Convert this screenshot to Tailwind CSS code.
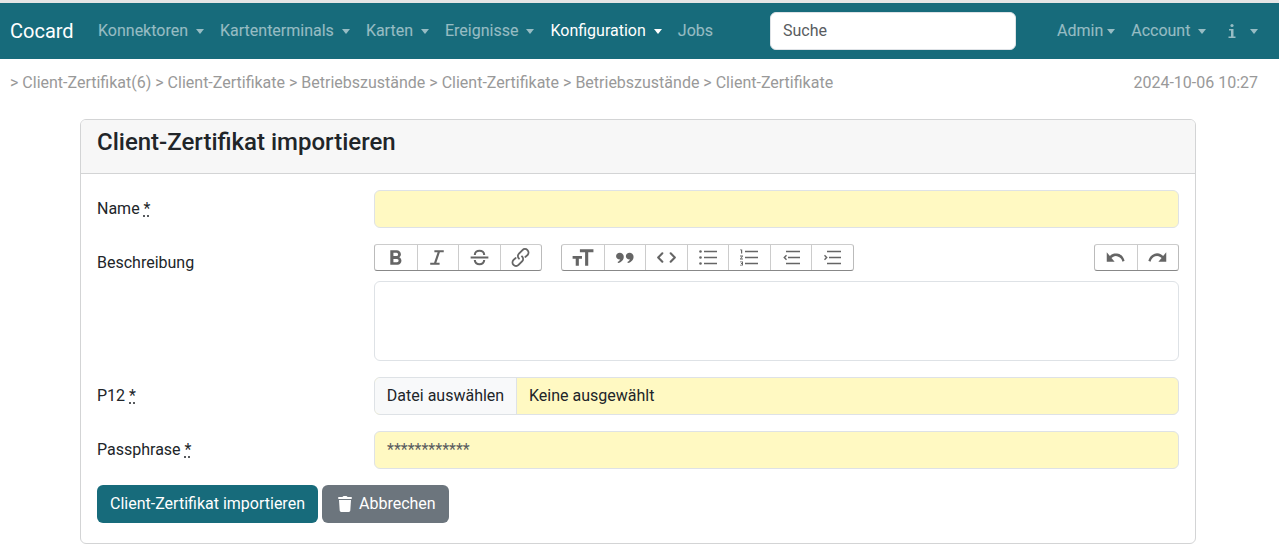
<!DOCTYPE html>
<html lang="de">
<head>
  <meta charset="UTF-8">
  <title>Client-Zertifikat importieren</title>
  <script src="https://cdn.jsdelivr.net/npm/@tailwindcss/browser@4"></script>
</head>
<body class="bg-white text-[16px] leading-6 text-[#212529] font-['Roboto',sans-serif] overflow-hidden h-[558px]">

  <div class="h-[3px] bg-[#e5e5e5]"></div>

  <!-- Navigation -->
  <nav class="h-[56px] bg-[#176b7b] flex items-center pl-[10px] text-white/55">
    <a class="text-[20px] text-white w-[80px]">Cocard</a>
    <a class="flex items-center px-2">Konnektoren<span class="ml-2 border-x-[4px] border-t-[5px] border-x-transparent border-t-white/55"></span></a>
    <a class="flex items-center px-2">Kartenterminals<span class="ml-2 border-x-[4px] border-t-[5px] border-x-transparent border-t-white/55"></span></a>
    <a class="flex items-center px-2">Karten<span class="ml-2 border-x-[4px] border-t-[5px] border-x-transparent border-t-white/55"></span></a>
    <a class="flex items-center px-2">Ereignisse<span class="ml-2 border-x-[4px] border-t-[5px] border-x-transparent border-t-white/55"></span></a>
    <a class="flex items-center px-2 text-white">Konfiguration<span class="ml-2 border-x-[4px] border-t-[5px] border-x-transparent border-t-white"></span></a>
    <a class="px-2">Jobs</a>
    <div class="w-[246px] h-[38px] ml-[49px] mr-[33px] bg-white border border-[#dee2e6] rounded-md px-3 flex items-center text-[#595c5f]">Suche</div>
    <a class="flex items-center px-2">Admin<span class="ml-1 border-x-[4px] border-t-[5px] border-x-transparent border-t-white/55"></span></a>
    <a class="flex items-center px-2">Account<span class="ml-2 border-x-[4px] border-t-[5px] border-x-transparent border-t-white/55"></span></a>
    <a class="flex items-center pl-[14px]">
      <svg class="w-[8px] h-[16px]" viewBox="0 0 8 16" fill="currentColor"><circle cx="4" cy="2.5" r="1.6"/><path d="M1 6h4.500v7.500H7.500V15H.5v-1.500h2.500V7.500H1z"/></svg>
      <span class="ml-[14px] border-x-[4px] border-t-[5px] border-x-transparent border-t-white/55"></span>
    </a>
  </nav>

  <!-- Breadcrumb -->
  <div class="h-[47px] flex items-center justify-between pl-[10px] pr-[21px] text-[#999999]">
    <div>&gt; Client-Zertifikat(6) &gt; Client-Zertifikate &gt; Betriebszustände &gt; Client-Zertifikate &gt; Betriebszustände &gt; Client-Zertifikate</div>
    <div>2024-10-06 10:27</div>
  </div>

  <!-- Card -->
  <div class="ml-[80px] mt-[13px] w-[1116px] h-[425px] border border-[#d3d4d5] rounded-md overflow-hidden">
    <div class="h-[54px] bg-[#f7f7f7] border-b border-[#d3d4d5] px-4 pt-2">
      <h4 class="text-[24px] leading-[29px] font-medium">Client-Zertifikat importieren</h4>
    </div>

    <div class="px-4 pt-4">
      <div class="grid grid-cols-[277px_805px] mb-4">
        <label class="pt-[7px]">Name <abbr class="underline decoration-dotted underline-offset-2">*</abbr></label>
        <div class="h-[38px] bg-[#fff9c2] border border-[#dee2e6] rounded-md"></div>
      </div>

      <div class="grid grid-cols-[277px_805px] mb-4">
        <label class="pt-[7px]">Beschreibung</label>
        <div>
          <div class="flex justify-between h-[27px] mb-[10px]">
            <div class="flex">
              <div class="flex h-[27px] border border-[#bbbbbb] border-t-[#cccccc] border-b-[#888888] rounded-[3px]">
                <div class="w-[41.5px] flex items-center justify-center">
                  <svg class="w-[25px] h-[25px] opacity-60" viewBox="0 0 24 24" fill="#000000"><path d="M15.600 11.800c1-.7 1.600-1.800 1.600-2.800a4 4 0 0 0-4-4H7v14h7c2.100 0 3.700-1.700 3.700-3.800 0-1.500-.8-2.800-2.100-3.400zM10 7.500h3a1.500 1.500 0 1 1 0 3h-3zm3.500 9H10v-3h3.500a1.500 1.500 0 1 1 0 3z"/></svg>
                </div>
                <div class="w-[41.5px] border-l border-[#cccccc] flex items-center justify-center">
                  <svg class="w-[25px] h-[25px] opacity-60" viewBox="0 0 24 24" fill="#000000"><path d="M9 5v2h3.100l-3.400 10H5v2h9v-2h-3.100l3.400-10H18V5z"/></svg>
                </div>
                <div class="w-[41.5px] border-l border-[#cccccc] flex items-center justify-center">
                  <svg class="w-[25px] h-[25px] opacity-60" viewBox="0 0 24 24" fill="none" stroke="#000000" stroke-width="2"><path d="M3.500 12h17M16.500 9.500C16.500 7 14.500 5.500 12 5.500S7.500 7 7.500 9.500M7.500 14.500c0 2.500 2 4 4.500 4s4.500-1.500 4.500-4"/></svg>
                </div>
                <div class="w-[41.5px] border-l border-[#cccccc] flex items-center justify-center">
                  <svg class="w-[25px] h-[25px] opacity-60" viewBox="0 0 24 24" fill="#000000"><path d="M9.880 13.700a4.300 4.300 0 0 1 0-6.070l3.370-3.370a4.260 4.260 0 0 1 6.070 0 4.300 4.300 0 0 1 0 6.060l-1.960 1.720a.91.91 0 1 1-1.300-1.300l1.970-1.710a2.460 2.460 0 0 0-3.480-3.480l-3.380 3.370a2.460 2.460 0 0 0 0 3.480.91.91 0 1 1-1.290 1.300zm4.240-3.400a4.300 4.300 0 0 1 0 6.060l-3.370 3.370a4.260 4.260 0 0 1-6.070 0 4.300 4.300 0 0 1 0-6.060l1.960-1.720a.91.91 0 1 1 1.300 1.300l-1.970 1.710a2.460 2.460 0 0 0 3.480 3.480l3.380-3.370a2.460 2.460 0 0 0 0-3.480.91.91 0 1 1 1.290-1.300z"/></svg>
                </div>
              </div>
              <div class="flex h-[27px] ml-[19px] border border-[#bbbbbb] border-t-[#cccccc] border-b-[#888888] rounded-[3px]">
                <div class="w-[41.5px] flex items-center justify-center">
                  <svg class="w-[25px] h-[25px] opacity-60" viewBox="0 0 24 24" fill="#000000"><path d="M9.500 4h13v3H17.500v13h-3V7h-5zM2.500 10.500h9v2.800H8.500V20h-3v-6.700h-3z"/></svg>
                </div>
                <div class="w-[41.5px] border-l border-[#cccccc] flex items-center justify-center">
                  <svg class="w-[25px] h-[25px] opacity-60" viewBox="0 0 24 24" fill="#000000"><path d="M7.500 7.500c2.300 0 3.800 1.700 3.800 3.900 0 3-2.300 5.300-5.400 6l-.6-1c1.400-.6 2.300-1.500 2.600-2.600-2.200.2-4-1.200-4-3.100 0-1.800 1.500-3.200 3.600-3.200zM16.900 7.500c2.300 0 3.800 1.700 3.800 3.900 0 3-2.300 5.300-5.400 6l-.6-1c1.400-.6 2.300-1.500 2.600-2.600-2.200.2-4-1.200-4-3.100 0-1.800 1.500-3.200 3.600-3.200z"/></svg>
                </div>
                <div class="w-[41.5px] border-l border-[#cccccc] flex items-center justify-center">
                  <svg class="w-[25px] h-[25px] opacity-60" viewBox="0 0 24 24" fill="none" stroke="#000000" stroke-width="2" stroke-linecap="round" stroke-linejoin="round"><path d="M8 8l-4 4 4 4M16 8l4 4-4 4"/></svg>
                </div>
                <div class="w-[41.5px] border-l border-[#cccccc] flex items-center justify-center">
                  <svg class="w-[20px] h-[25px] opacity-60" viewBox="0 0 20 24" fill="#000000"><circle cx="2.500" cy="6" r="1.300"/><circle cx="2.500" cy="12" r="1.300"/><circle cx="2.500" cy="18" r="1.300"/><path d="M6 5.200h13v1.600H6zM6 11.200h13v1.600H6zM6 17.200h13v1.600H6z"/></svg>
                </div>
                <div class="w-[41.5px] border-l border-[#cccccc] flex items-center justify-center">
                  <svg class="w-[20px] h-[25px] opacity-60" viewBox="0 0 20 24" fill="#000000"><path d="M6 5.200h13v1.600H6zM6 11.200h13v1.600H6zM6 17.200h13v1.600H6zM2 4h1.200v4H2zM1 4h1v.8H1zM1 10h3v.8L2.200 13H4v1H1v-.8L2.800 11H1zM1 16h3v4H1v-.8h2v-.8H2v-.8h1v-.8H1z"/></svg>
                </div>
                <div class="w-[41.5px] border-l border-[#cccccc] flex items-center justify-center">
                  <svg class="w-[20px] h-[25px] opacity-60" viewBox="0 0 20 24" fill="#000000"><path d="M5 5.200h14v1.600H5zM7 11.200h12v1.600H7zM5 17.200h14v1.600H5zM5 9.300l1 1L4.300 12 6 13.700l-1 1L2.300 12z"/></svg>
                </div>
                <div class="w-[41.5px] border-l border-[#cccccc] flex items-center justify-center">
                  <svg class="w-[20px] h-[25px] opacity-60" viewBox="0 0 20 24" fill="#000000"><path d="M5 5.200h14v1.600H5zM7 11.200h12v1.600H7zM5 17.200h14v1.600H5zM3 9.300l-1 1L3.700 12 2 13.700l1 1L5.700 12z"/></svg>
                </div>
              </div>
            </div>
            <div class="flex h-[27px] border border-[#bbbbbb] border-t-[#cccccc] border-b-[#888888] rounded-[3px]">
              <div class="w-[41.5px] flex items-center justify-center">
                <svg class="w-[21px] h-[25px] opacity-60" viewBox="0 0 24 24" preserveAspectRatio="none" fill="#000000"><path d="M12.500 8c-2.600 0-5 1-6.900 2.600L2 7v9h9l-3.600-3.600A8 8 0 0 1 20 16l2.400-.8a10.500 10.500 0 0 0-10-7.200z"/></svg>
              </div>
              <div class="w-[41.5px] border-l border-[#cccccc] flex items-center justify-center">
                <svg class="w-[21px] h-[25px] opacity-60" viewBox="0 0 24 24" preserveAspectRatio="none" fill="#000000"><path d="M18.400 10.600a10.500 10.500 0 0 0-16.900 4.600L4 16a8 8 0 0 1 12.700-3.600L13 16h9V7z"/></svg>
              </div>
            </div>
          </div>
          <div class="h-[80px] border border-[#dee2e6] rounded-md"></div>
        </div>
      </div>

      <div class="grid grid-cols-[277px_805px] mb-4">
        <label class="pt-[7px]">P12 <abbr class="underline decoration-dotted underline-offset-2">*</abbr></label>
        <div class="flex h-[38px] bg-[#fff9c2] border border-[#dee2e6] rounded-md overflow-hidden">
          <div class="w-[142px] bg-[#f8f9fa] border-r border-[#dee2e6] flex items-center justify-center">Datei auswählen</div>
          <div class="flex items-center pl-3">Keine ausgewählt</div>
        </div>
      </div>

      <div class="grid grid-cols-[277px_805px] mb-4">
        <label class="pt-[7px]">Passphrase <abbr class="underline decoration-dotted underline-offset-2">*</abbr></label>
        <div class="flex items-center h-[38px] bg-[#fff9c2] border border-[#dee2e6] rounded-md px-3 pb-px text-[#595c5f]">************</div>
      </div>

      <div class="flex gap-1">
        <button class="h-[38px] w-[221px] bg-[#176b7b] text-white rounded-md">Client-Zertifikat importieren</button>
        <button class="h-[38px] w-[127px] bg-[#6c757d] text-white rounded-md flex items-center pl-[16px] gap-[7px]">
          <svg class="w-[14px] h-[16px]" viewBox="0 0 14 16" fill="currentColor"><path d="M4.800.600C5 .200 5.300 0 5.700 0h2.600c.4 0 .7.200.9.600L9.500 1H13a1 1 0 0 1 0 2H1a1 1 0 0 1 0-2h3.500zM1 4h12l-.7 10.600A1.500 1.500 0 0 1 10.800 16H3.200a1.500 1.500 0 0 1-1.500-1.400z"/></svg>
          Abbrechen
        </button>
      </div>
    </div>
  </div>

</body>
</html>
